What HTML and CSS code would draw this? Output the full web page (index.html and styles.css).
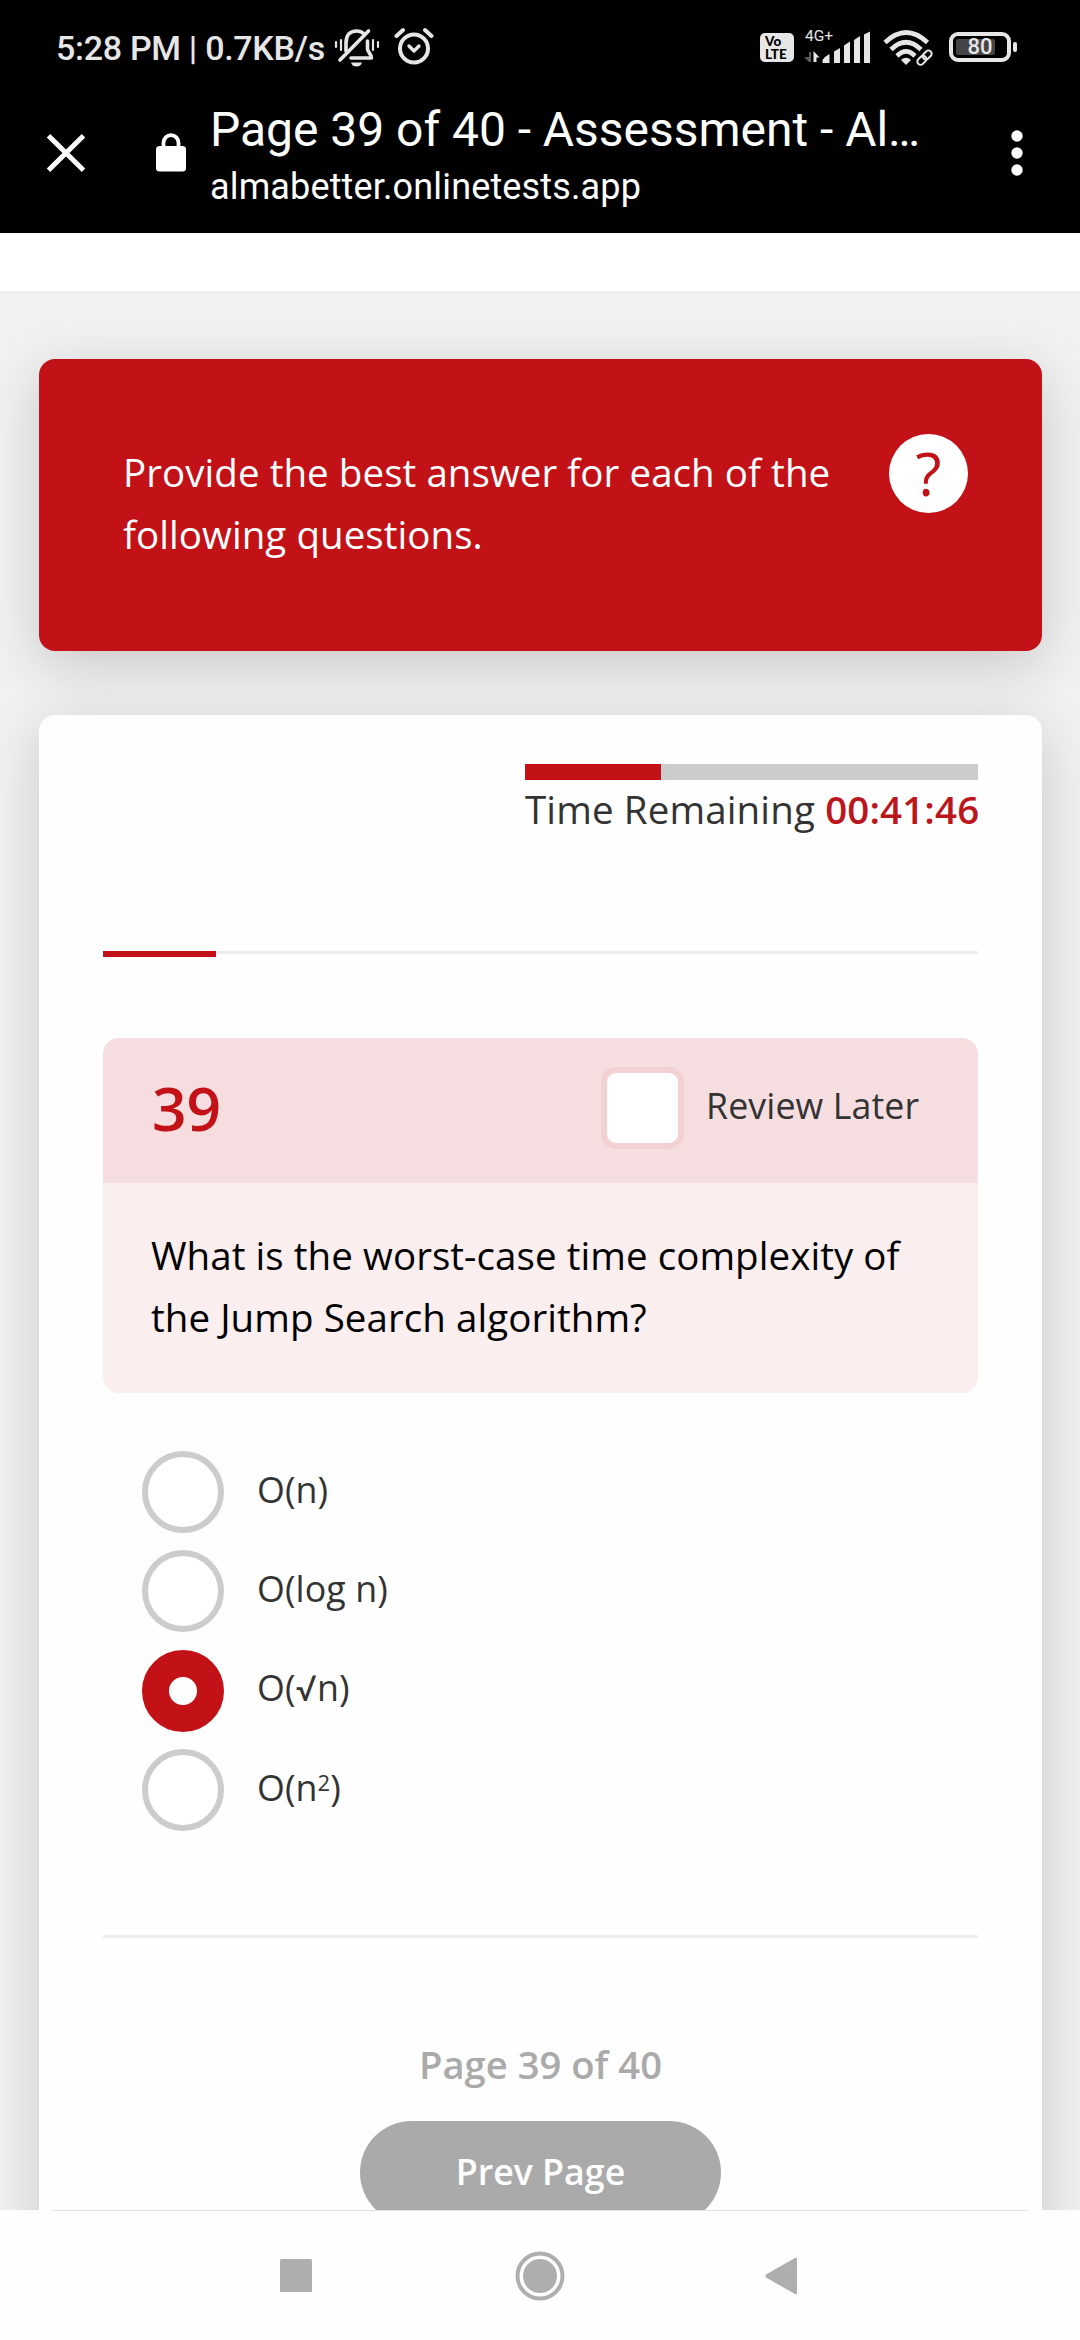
FILE: index.html
```html
<!DOCTYPE html>
<html lang="en">
<head>
<meta charset="utf-8">
<title>Page 39 of 40 - Assessment</title>
<link rel="stylesheet" href="styles.css">
</head>
<body>
<header class="top">
  <div class="status">
    <span class="clock">5:28 PM | 0.7KB/s</span>
    <svg class="bell" width="46" height="40" viewBox="0 0 46 40" fill="none" stroke="#e6e6e6" stroke-width="3.6" stroke-linecap="round" stroke-linejoin="round">
      <path d="M12 23v-8C12 7 16 3 22.500 3c3 0 5.500 1 7 2.500M33.500 13v8c0 3 4 5 4 9H17"/>
      <path d="M6 32L34.500 3"/>
      <path d="M2 14v5M7 12v10M39 12v10M44 14v5" stroke-width="2.200"/>
      <path d="M17 34.500h11c-1 3-3 4-5.500 4s-4.500-1-5.500-4z" fill="#e6e6e6" stroke="none"/>
    </svg>
    <svg class="alarm" width="40" height="38" viewBox="0 0 40 38" fill="none" stroke="#e6e6e6" stroke-linecap="round" stroke-linejoin="round">
      <circle cx="20" cy="21.500" r="14" stroke-width="4"/>
      <path d="M2.500 9L9 3M31 3l6.500 6" stroke-width="4"/>
      <path d="M15 19l5 5 5-5" stroke-width="3.400"/>
    </svg>
    <span class="volte"><b>Vo</b><b>LTE</b></span>
    <span class="cell">
      <span class="net">4G+</span>
      <svg width="67" height="34" viewBox="0 0 67 34" fill="#e6e6e6">
        <path d="M5 32V22h2v10zM5 32l-5-5h5z" fill="#5a5a5a"/>
        <path d="M9.500 21l6 6.500h-3V32h-3z"/>
        <path d="M18.500 33v-3c2-3 4-4.500 7-6V33zM30 33V21.500l6-3.500v15zM40 33V15.500l6-4v21.500zM50 33V10l6-4v27zM60 33V4.500l6-3V33z"/>
      </svg>
    </span>
    <svg class="wifi" width="50" height="38" viewBox="0 0 50 38" fill="none" stroke="#e6e6e6" stroke-width="4.600">
      <path d="M2 13.500Q23 -6.500 44.500 13.500M8 20.500Q23 6 38 20.500M14 27Q23 18 32 27"/>
      <path d="M18 31q5-4.500 10 0l-5 5z" fill="#e6e6e6" stroke="none"/>
      <g stroke="#000" stroke-width="6"><rect x="34" y="27.500" width="9" height="6" rx="3" transform="rotate(-45 38 31)"/></g>
      <g stroke-width="2" transform="rotate(-45 41.500 29)"><rect x="33" y="25.500" width="10" height="6.500" rx="3.200"/><rect x="40.500" y="25.500" width="10" height="6.500" rx="3.200"/></g>
    </svg>
    <span class="battery"><span class="shell"><span class="charge"></span><span class="pct">80</span></span><span class="tip"></span></span>
  </div>
  <div class="bar">
    <svg class="close" width="40" height="38" viewBox="0 0 40 38" stroke="#fff" stroke-width="5"><path d="M2.500 1.800l35 34.400M37.500 1.800l-35 34.400"/></svg>
    <svg class="lock" width="30" height="39" viewBox="0 0 30 39"><rect y="13" width="30" height="25.500" rx="3.500" fill="#fff"/><path d="M7.500 15V9.800a7.500 7.700 0 0 1 15 0V15" fill="none" stroke="#fff" stroke-width="3.800"/></svg>
    <div class="address"><div class="title">Page 39 of 40 - Assessment - Al…</div><div class="url">almabetter.onlinetests.app</div></div>
    <svg class="more" width="12" height="46" viewBox="0 0 12 46" fill="#fff"><circle cx="6" cy="6" r="5.700"/><circle cx="6" cy="23" r="5.700"/><circle cx="6" cy="40" r="5.700"/></svg>
  </div>
</header>
<main class="view">
  <div class="strip"></div>
  <section class="intro">
    <p class="intro-text">Provide the best answer for each of the<br>following questions.</p>
    <span class="help">?</span>
  </section>
  <section class="quiz">
    <div class="timer">
      <div class="track"><div class="fill" style="width:30%"></div></div>
      <div class="remaining">Time Remaining <b>00:41:46</b></div>
    </div>
    <div class="progress"><div class="done"></div></div>
    <article class="question">
      <div class="question-head">
        <span class="number">39</span>
        <span class="check"></span>
        <span class="review">Review Later</span>
      </div>
      <p class="question-text">What is the worst-case time complexity of<br>the Jump Search algorithm?</p>
    </article>
    <ul class="options">
      <li><span class="radio"></span><span class="label">O(n)</span></li>
      <li><span class="radio"></span><span class="label">O(log n)</span></li>
      <li><span class="radio on"></span><span class="label">O(<span class="root">√</span>n)</span></li>
      <li><span class="radio"></span><span class="label">O(n<sup>2</sup>)</span></li>
    </ul>
    <div class="rule"></div>
    <div class="pager"><div class="page-no"><span>Page 39 of 40</span></div><button class="prev">Prev Page</button></div>
  </section>
</main>
<nav class="nav">
  <svg width="32" height="33" viewBox="0 0 32 33"><rect width="32" height="33" rx="1.500" fill="#aeaeae"/></svg>
  <svg width="50" height="50" viewBox="0 0 50 50"><circle cx="25" cy="25" r="22.500" fill="none" stroke="#aeaeae" stroke-width="4"/><circle cx="25" cy="25" r="17" fill="#aeaeae"/></svg>
  <svg width="32" height="38" viewBox="0 0 32 38"><path d="M1 17.500Q0 19 1 20.500L30 37q2 1 2-1V2q0-2-2-1z" fill="#aeaeae"/></svg>
</nav>
</body>
</html>
```
FILE: styles.css
```css
* { box-sizing: border-box; }
body { margin: 0; width: 1080px; height: 2340px; overflow: hidden; background: #fefefe; color: #333; font-family: "Open Sans", "Noto Sans", sans-serif; display: flex; flex-direction: column; }
svg { display: block; flex: none; }
p, ul { margin: 0; padding: 0; }

.top { height: 233px; flex: none; background: #000; color: #fff; font-family: Roboto, sans-serif; }
.status { height: 90px; display: flex; align-items: flex-start; padding-left: 56px; color: #e6e6e6; }
.clock { width: 278px; font-size: 34px; font-weight: 500; line-height: 40px; letter-spacing: -.3px; margin-top: 28px; white-space: nowrap; }
.bell { margin-top: 28px; }
.alarm { margin: 27px 0 0 14px; }
.volte { margin: 33px 0 0 326px; width: 34px; height: 29px; border-radius: 5px; background: #e6e6e6; color: #000; display: flex; flex-direction: column; padding: 2px 0 0 5px; font: 900 13.500px/13px Lato, sans-serif; }
.cell { position: relative; margin: 30px 0 0 10px; width: 67px; }
.net { position: absolute; left: 1px; top: -2px; font-size: 15.500px; line-height: 16px; }
.wifi { margin: 29px 0 0 12px; }
.battery { display: flex; align-items: center; gap: 2px; margin: 32px 0 0 16px; }
.shell { position: relative; width: 62px; height: 30px; border: 4px solid #e6e6e6; border-radius: 9px; display: flex; align-items: center; justify-content: center; }
.charge { position: absolute; left: 3px; top: 3px; width: 39px; height: 16px; border-radius: 2px; background: #444; }
.pct { position: relative; font-size: 22px; font-weight: 500; line-height: 22px; }
.tip { width: 4px; height: 10px; border-radius: 2px; background: #e6e6e6; }

.bar { display: flex; align-items: flex-start; padding-left: 46px; }
.close { margin-top: 44px; }
.lock { margin: 43px 0 0 70px; }
.address { width: 712px; margin-left: 24px; padding-top: 8px; white-space: nowrap; }
.title { font-size: 48px; line-height: 64px; letter-spacing: -.03px; }
.url { font-size: 36px; line-height: 44px; letter-spacing: .15px; margin-top: 3px; }
.more { margin: 40px 0 0 89px; }

.view { height: 1977px; flex: none; overflow: hidden; background: #f1f1f1; }
.strip { height: 61px; background: #fff; border-bottom: 3px solid #eee; }
.intro, .quiz { position: relative; margin: 0 38px 0 39px; border-radius: 16px; box-shadow: 0 14px 55px rgba(0, 0, 0, .17); }
.intro { z-index: 1; margin-top: 65px; height: 292px; padding: 82px 74px 0 84px; background: #c31217; color: #fff; display: flex; justify-content: space-between; }
.intro-text, .question-text { font-size: 38.500px; line-height: 62px; letter-spacing: .06px; white-space: nowrap; }
.help { width: 79px; height: 79px; margin-top: -7px; border-radius: 50%; background: #fff; color: #c31217; font-size: 60px; line-height: 78px; text-align: center; }
.quiz { margin-top: 64px; padding: 49px 64px 0; height: 1700px; background: #fefefe; }
.timer { width: 453px; margin-left: auto; }
.track { height: 16px; background: #ccc; }
.fill { height: 16px; background: #c31217; }
.remaining { font-size: 38.500px; line-height: 58px; letter-spacing: .13px; white-space: nowrap; }
.remaining b { font-weight: 600; color: #bb161c; }
.progress { margin-top: 113px; height: 6px; background: linear-gradient(#ededed 3px, transparent 3px); }
.done { width: 113px; height: 6px; background: #c31217; }
.question { margin-top: 81px; height: 355px; border-radius: 16px; overflow: hidden; background: #faeeee; }
.question-head { height: 145px; display: flex; align-items: flex-start; padding-left: 49px; background: #f6dee0; }
.number { width: 449px; margin-top: 30px; font-size: 60.500px; font-weight: 600; line-height: 80px; color: #c31217; }
.check { width: 83px; height: 82px; margin-top: 29px; border: 6px solid #f3d0d2; border-radius: 15px; background: #fff; }
.review { margin: 36px 0 0 22px; font-size: 35.750px; line-height: 62px; letter-spacing: .1px; white-space: nowrap; }
.question-text { padding: 41px 0 0 48px; color: #000; }
.options { list-style: none; margin-top: 58px; padding-left: 39px; display: grid; gap: 17.400px; }
.options li { height: 82px; display: flex; align-items: center; gap: 33px; }
.radio { width: 82px; height: 82px; border: 6px solid #ccc; border-radius: 50%; background: #fff; }
.radio.on { border: 27px solid #c31217; }
.label { font-size: 35.750px; line-height: 62px; letter-spacing: .1px; padding-bottom: 6px; }
.root { font-family: Roboto, sans-serif; }
sup { font-size: 22px; line-height: 0; vertical-align: 9.800px; }
.rule { height: 3px; margin-top: 104px; background: #ededed; }
.pager { display: flex; flex-direction: column; align-items: center; }
.page-no { margin-top: 98px; font-size: 38.200px; font-weight: 600; line-height: 57px; color: #aaa; }
.prev { margin-top: 28px; width: 361px; height: 103px; padding: 0 0 4px; border: 0; border-radius: 52px; background: #aaa; color: #fff; font: 600 35.750px/62px "Open Sans", sans-serif; }

.nav { height: 130px; flex: none; display: grid; grid-template-columns: 244px 244px 238px; justify-items: center; align-items: center; margin: 0 52px; padding-left: 122px; border-top: 1px solid #e2e2e2; }
```
